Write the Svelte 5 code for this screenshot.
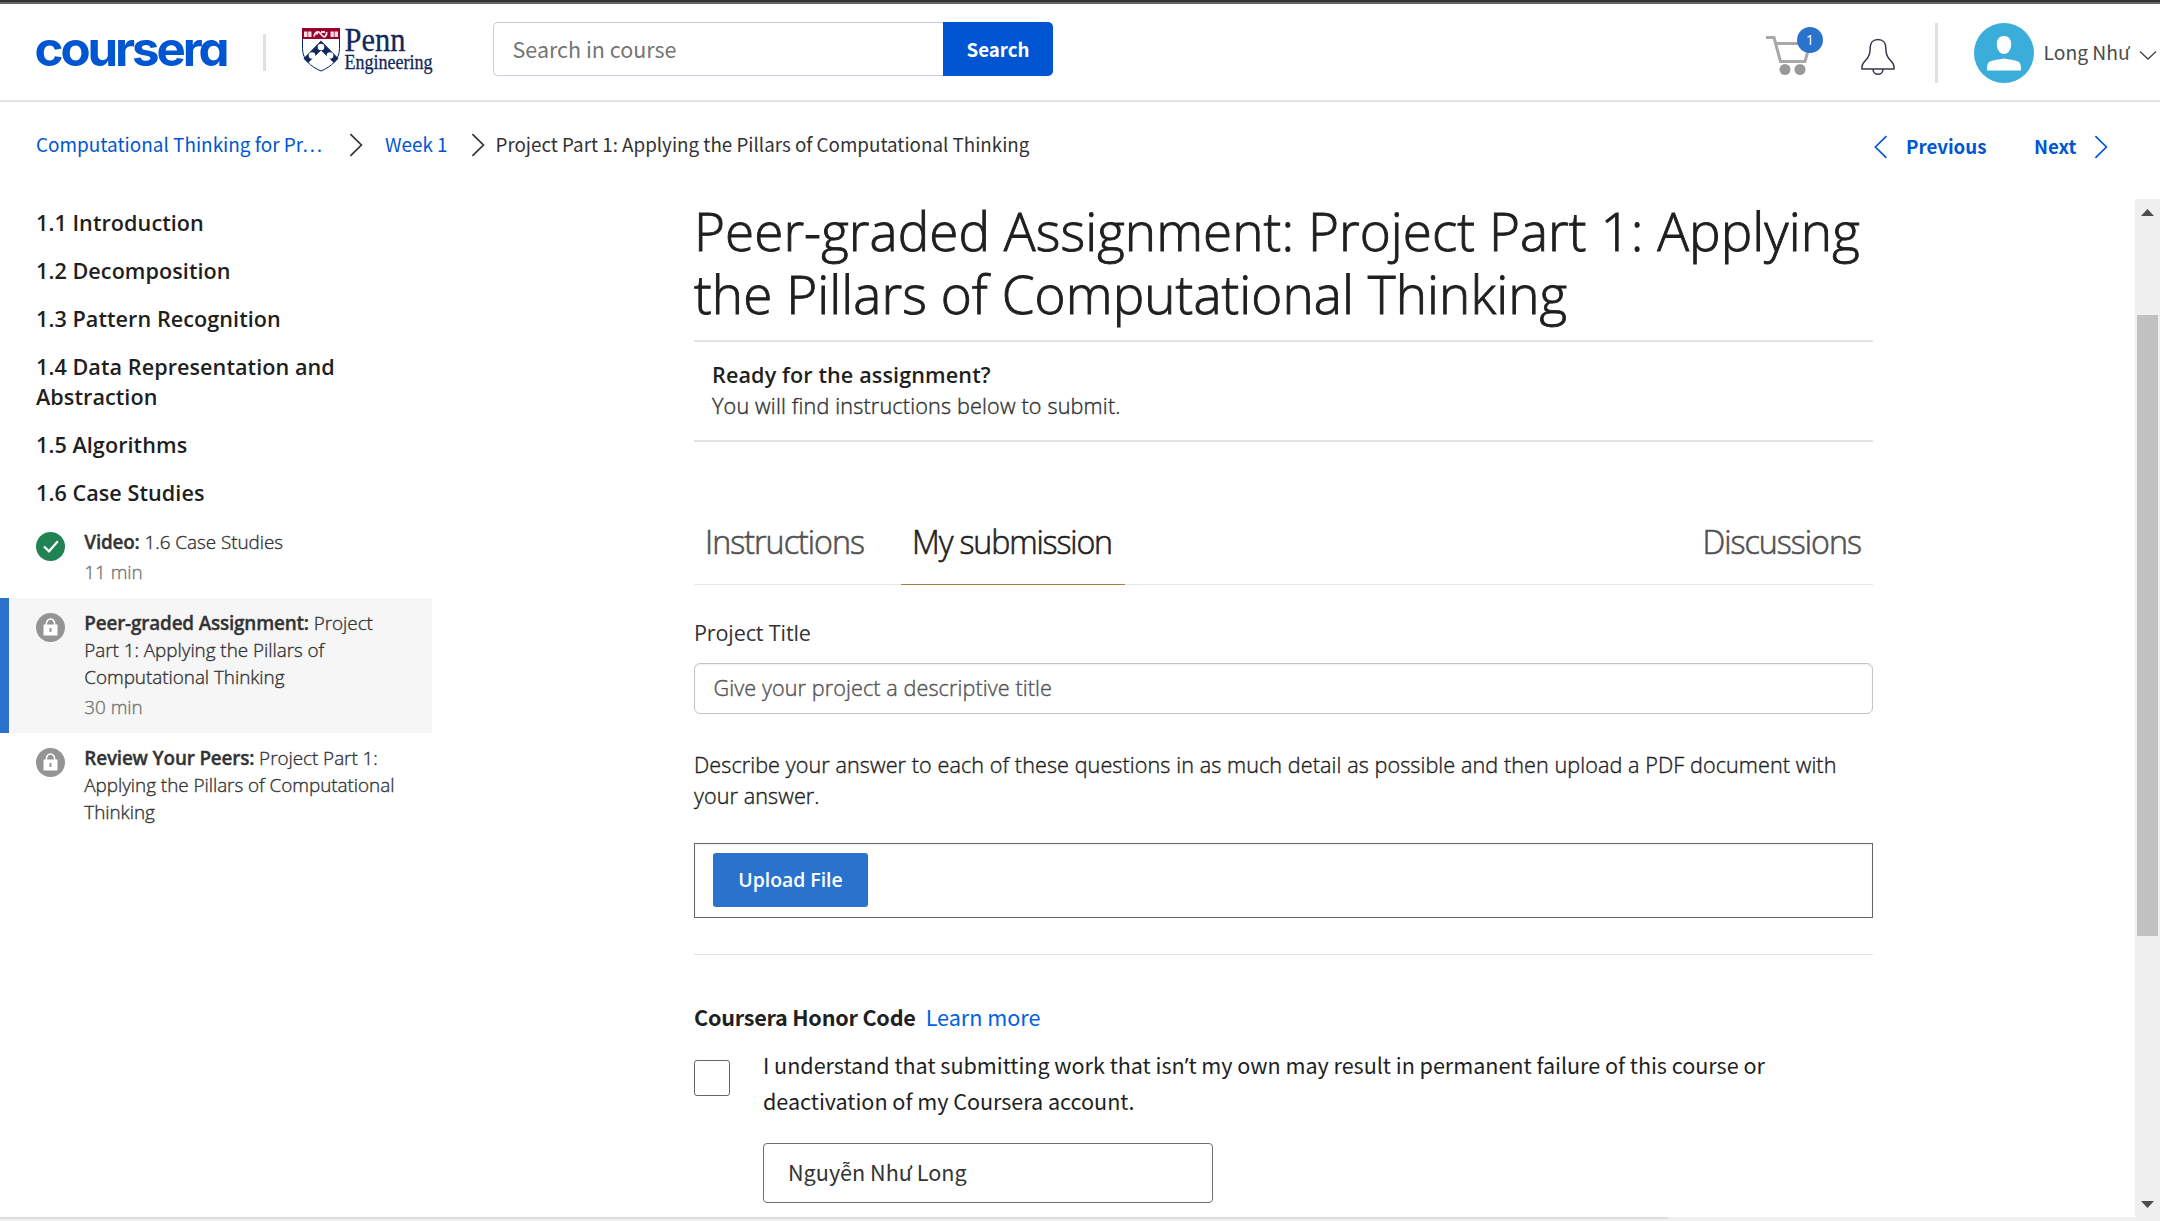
<script>
  const weeks = [
    '1.1 Introduction',
    '1.2 Decomposition',
    '1.3 Pattern Recognition',
    '1.4 Data Representation and Abstraction',
    '1.5 Algorithms',
    '1.6 Case Studies'
  ];

  const items = [
    { kind: 'Video:', name: '1.6 Case Studies', time: '11 min', done: true },
    {
      kind: 'Peer-graded Assignment:',
      name: 'Project Part 1: Applying the Pillars of Computational Thinking',
      time: '30 min',
      active: true
    },
    { kind: 'Review Your Peers:', name: 'Project Part 1: Applying the Pillars of Computational Thinking' }
  ];
</script>

{#snippet chevron(dir)}
  <svg class="chev" width="14" height="24" viewBox="0 0 14 24">
    <path d={dir === 'left' ? 'M12.4 1.2 1.4 12l11 10.8' : 'M1.4 1.2 12.4 12l-11 10.8'} />
  </svg>
{/snippet}

<div class="page">
  <header>
    <svg class="brand" width="200" height="44" viewBox="0 0 200 44" aria-label="coursera">
      <text x="1.5" y="36.5" textLength="192" lengthAdjust="spacingAndGlyphs">coursera</text>
    </svg>
    <span class="rule short"></span>
    <svg class="penn" width="136" height="52" viewBox="0 0 136 52">
      <path class="shield" d="M.5.5h37v20c0 11-8 18-18.500 22.500C8.500 38.500.5 31.500.5 20.500z" />
      <path class="band" d="M0 0h38v11H0z" />
      <path class="book" d="M2 3.500h3.500v5.500H2zM6.200 3.500h3.300v5.500H6.200zM28.500 3.500h3.300v5.500h-3.300zM32.500 3.500H36v5.500h-3.500z" />
      <path class="snake" d="M12 8.500c1-5 4-5.500 6-3.500s3 5 5 3.500 2-2.500 1.500-4.500M13 5.500h3M19 4h4" />
      <path class="chevron" d="M19 12.500 36.500 30.500 32 35 19 22.500 6 35 1.500 30.500z" />
      <circle cx="19" cy="19" r="3.300" /><circle cx="10" cy="27.500" r="3.300" /><circle cx="28" cy="27.500" r="3.300" />
      <text class="p1" x="42.500" y="23" textLength="61" lengthAdjust="spacingAndGlyphs">Penn</text>
      <text class="p2" x="42.500" y="40.500" textLength="88" lengthAdjust="spacingAndGlyphs">Engineering</text>
    </svg>

    <div class="search">
      <div class="field">Search in course</div>
      <button>Search</button>
    </div>

    <div class="cart">
      <svg width="48" height="42" viewBox="0 0 48 42">
        <path d="M0 3.500h8l6.500 24H39L44 9.500H9.500" />
        <circle cx="19" cy="35.500" r="5.500" /><circle cx="34" cy="35.500" r="5.500" />
      </svg>
      <span class="badge">1</span>
    </div>
    <svg class="bell" width="36" height="38" viewBox="0 0 36 38">
      <path d="M18 1.500c-5 0-7.800 3.500-7.800 8 0 4.500-.4 7.500-2.700 10.500-2.600 3.400-5.500 5-5.500 8.500v2.500h32v-2.500c0-3.500-2.900-5.100-5.500-8.500-2.300-3-2.700-6-2.700-10.500 0-4.500-2.800-8-7.800-8zM13 31c0 7 10 7 10 0" />
    </svg>
    <span class="rule tall"></span>
    <svg class="avatar" width="60" height="60" viewBox="0 0 60 60">
      <circle cx="30" cy="30" r="30" />
      <path d="M30 13c4.500 0 7.200 3 7.200 8 0 5.500-3 10-7.200 10s-7.200-4.500-7.200-10c0-5 2.700-8 7.200-8zM13 47.500c0-5 .5-8 3-9 4-1.800 8-2 14-3 6 1 10 1.200 14 3 2.500 1 3 4 3 9z" />
    </svg>
    <span class="user">Long Như</span>
    <svg class="down" width="18" height="11" viewBox="0 0 18 11"><path d="M1 1.500 9 9l8-7.500" /></svg>
  </header>

  <nav class="crumbs">
    <a class="c1" href="#course">Computational Thinking for Pr…</a>
    {@render chevron('right')}
    <a class="c2" href="#week">Week 1</a>
    {@render chevron('right')}
    <span class="c3">Project Part 1: Applying the Pillars of Computational Thinking</span>
    <div class="pager">
      {@render chevron('left')}
      <b class="prev">Previous</b>
      <b class="next">Next</b>
      {@render chevron('right')}
    </div>
  </nav>

  <div class="body">
    <aside>
      {#each weeks as week}
        <h3>{week}</h3>
      {/each}
      {#each items as item}
        <div class="item" class:active={item.active}>
          <svg class="status" class:done={item.done} width="29" height="29" viewBox="0 0 29 29">
            <circle cx="14.500" cy="14.500" r="14.500" />
            {#if item.done}
              <path class="tick" d="M8 14.500l5 4.800 8.800-10" />
            {:else}
              <path class="lock" d="M7.500 11.500h14v11h-14z" />
              <path class="shackle" d="M10.300 12c-.6-8 9-8 8.400 0" />
              <path class="key" d="M14.500 15v4" />
            {/if}
          </svg>
          <div class="label">
            <div class="name"><b>{item.kind}</b> {item.name}</div>
            {#if item.time}<div class="time">{item.time}</div>{/if}
          </div>
        </div>
      {/each}
    </aside>

    <main>
      <h1>Peer-graded Assignment: Project Part 1: Applying the Pillars of Computational Thinking</h1>
      <section class="ready">
        <b>Ready for the assignment?</b>
        <p>You will find instructions below to submit.</p>
      </section>
      <div class="tabs">
        <span class="tab first">Instructions</span>
        <span class="tab on">My submission</span>
        <span class="tab last">Discussions</span>
      </div>
      <div class="ptitle">Project Title</div>
      <div class="input">Give your project a descriptive title</div>
      <p class="describe">Describe your answer to each of these questions in as much detail as possible and then upload a PDF document with your answer.</p>
      <div class="upload"><button>Upload File</button></div>
      <hr />
      <div class="honor"><b>Coursera Honor Code</b><a href="#honor">Learn more</a></div>
      <div class="agree">
        <span class="box"></span>
        <div>
          <p>I understand that submitting work that isn<span class="quote">’</span>t my own may result in permanent failure of this course or deactivation of my Coursera account.</p>
          <div class="sign">Nguyễn Như Long</div>
        </div>
      </div>
    </main>

    <div class="scroll">
      <svg width="13" height="7" viewBox="0 0 13 7"><path d="M0 7 6.500 0 13 7z" /></svg>
      <span class="thumb"></span>
      <svg width="13" height="7" viewBox="0 0 13 7"><path d="M0 0h13L6.500 7z" /></svg>
    </div>
  </div>
  <footer><span></span></footer>
</div>

<style>
  :global(body) { overflow: hidden; }
  * { box-sizing: border-box; }
  .page {
    width: 2160px;
    height: 1221px;
    display: flex;
    flex-direction: column;
    background: #fff;
    color: #1f1f1f;
    font-family: "Open Sans", sans-serif;
    font-size: 21.6px;
    line-height: 31px;
  }
  p, h1, h3 { margin: 0; }
  a { color: #0056d2; text-decoration: none; }
  button { border: 0; padding: 0; color: #fff; text-align: center; }
  svg { flex: none; display: block; overflow: visible; }

  header {
    height: 102px;
    flex: none;
    display: flex;
    align-items: flex-start;
    border-top: 2px solid #333;
    border-bottom: 2px solid #e3e3e3;
    box-shadow: inset 0 2px #666;
    font-family: "Noto Sans CJK SC", sans-serif;
    padding-left: 33px;
    white-space: nowrap;
  }
  .brand { margin-top: 27px; }
  .brand text { font: 700 48px Inter, sans-serif; font-feature-settings: "cv11"; letter-spacing: -3px; fill: #0056d2; }
  .rule { width: 3px; background: #e0e0e0; flex: none; }
  .short { height: 37px; margin: 32px 0 0 30px; }
  .tall { height: 60px; margin: 21px 0 0 39px; }
  .penn { margin: 26px 0 0 36px; }
  .shield { fill: #fff; stroke: #01256e; stroke-width: 1; }
  .band { fill: #98002e; }
  .book { fill: #f3dfe5; }
  .snake { fill: none; stroke: #f3dfe5; stroke-width: 1.8; }
  .chevron { fill: #12295c; }
  .penn circle { fill: #fff; }
  .penn text { font-family: "Liberation Serif", serif; fill: #12295c; stroke: #12295c; stroke-width: .3; }
  .p1 { font-size: 34px; }
  .p2 { font-size: 20px; }
  .search { display: flex; margin: 20px 0 0 55px; height: 54px; }
  .field {
    width: 450px;
    border: 1px solid #c7ccd6;
    border-right: 0;
    border-radius: 5px 0 0 5px;
    padding-left: 18.500px;
    font-size: 21.500px;
    line-height: 52px;
    color: #757575;
  }
  .search button {
    width: 110px;
    background: #0056d2;
    border-radius: 0 5px 5px 0;
    font: 700 18.700px/52px "Noto Sans CJK SC", sans-serif;
  }
  .cart { margin: 32px 0 0 713px; position: relative; }
  .cart path { fill: none; stroke: #a8a8a8; stroke-width: 3; }
  .cart circle { fill: #999; }
  .badge {
    position: absolute;
    left: 31px;
    top: -7px;
    width: 26px;
    height: 26px;
    border-radius: 50%;
    background: #2a73cc;
    color: #fff;
    font: 14px/26px "Open Sans", sans-serif;
    text-align: center;
  }
  .bell { margin: 36px 0 0 46px; }
  .bell path { fill: none; stroke: #373a4d; stroke-width: 1.500; }
  .avatar { margin: 21px 0 0 36px; }
  .avatar circle { fill: #3badda; }
  .avatar path { fill: #fff; }
  .user { font-size: 19.300px; line-height: 28px; margin: 36px 0 0 9.500px; width: 95.500px; color: #4b4b4b; }
  .down path { fill: none; stroke: #444; stroke-width: 1.300; }
  .down { margin-top: 48px; }

  .crumbs {
    height: 97px;
    flex: none;
    display: flex;
    align-items: flex-start;
    padding: 28px 0 0 36px;
    font: 18.950px/28px "Noto Sans CJK SC", sans-serif;
    white-space: nowrap;
  }
  .chev { margin-top: 3px; }
  .chev path { fill: none; stroke: #333; stroke-width: 1.700; }
  .c1 { width: 313px; }
  .c2 { margin-left: 22px; width: 86px; font-size: 18.850px; }
  .c3 { margin-left: 10.500px; font-size: 18.800px; color: #333; }
  .pager { display: flex; margin: 2px 52px 0 auto; color: #0056d2; font-size: 18.700px; }
  .pager .chev path { stroke: #0056d2; }
  .prev { margin-left: 18px; width: 128px; }
  .next { width: 60px; }

  .body { flex: 1; min-height: 0; display: flex; }
  aside { width: 432px; }
  h3 { font-size: 21.600px; font-weight: 600; line-height: 30px; letter-spacing: .06px; padding: 9px 90px 9px 36px; }
  .item {
    display: flex;
    padding: 12px 32px 12px 36px;
    font-size: 18.900px;
    line-height: 27px;
    color: #333;
    font-weight: 300;
    letter-spacing: -.040px;
    -webkit-text-stroke: .35px;
  }
  .active { background: #f6f6f6; box-shadow: inset 9px 0 #2a73cc; }
  .status { margin: 2.500px 19px 0 .3px; }
  .status circle { fill: #949494; }
  .done circle { fill: #1f8354; }
  .tick { fill: none; stroke: #fff; stroke-width: 2.200; }
  .lock { fill: #fff; }
  .shackle { fill: none; stroke: #fff; stroke-width: 1.600; }
  .key { stroke: #949494; stroke-width: 2; }
  .item b { font-weight: 600; letter-spacing: -.18px; }
  .time { margin-top: 3px; color: #757575; }

  main { width: 1179px; margin-left: 262px; }
  h1 { font-size: 53px; line-height: 63px; font-weight: 300; letter-spacing: .06px; -webkit-text-stroke: .9px; }
  .ready { margin-top: 15px; border: 2px solid #e4e4e4; border-width: 2px 0; padding: 17px 0 19px 18px; }
  .ready b { font-weight: 600; letter-spacing: .11px; }
  .ready p, .input, .describe { font-weight: 300; -webkit-text-stroke: .4px; }
  .ready p { color: #333; letter-spacing: .17px; }
  .tabs {
    margin-top: 78px;
    display: flex;
    height: 65px;
    border-bottom: 1px solid #e8e8e8;
    font-size: 32.200px;
    line-height: 44px;
    letter-spacing: -.960px;
    font-weight: 300;
    -webkit-text-stroke: .6px;
    color: #525252;
  }
  .tab { padding: 0 10px 0 11px; height: 65px; white-space: nowrap; }
  .first { width: 171px; }
  .on { margin-left: 36px; width: 224px; border-bottom: 1px solid #a67f3b; color: #1f1f1f; letter-spacing: -1.150px; }
  .last { margin-left: auto; padding-right: 12px; letter-spacing: -1px; }
  .ptitle { margin-top: 32px; letter-spacing: -.150px; color: #333; }
  .input {
    margin-top: 15px;
    height: 51px;
    border: 1px solid #c4c4c4;
    border-radius: 6px;
    box-shadow: inset 0 1px 2px #0001;
    padding-left: 18.500px;
    line-height: 48px;
    color: #555;
    letter-spacing: .1px;
  }
  .describe { margin-top: 35px; letter-spacing: .08px; }
  .upload { margin-top: 32px; height: 75px; border: 1px solid #666; padding: 9px 0 0 18px; box-shadow: inset 0 1px 2px #0001; }
  .upload button { display: block; width: 155px; height: 54px; border-radius: 3px; background: #2a73cc; font: 600 19.400px/54px "Open Sans", sans-serif; }
  hr { margin: 36px 0 0; border: 0; height: 1px; background: #e0e0e0; }
  .honor { margin-top: 44px; font-family: "Noto Sans CJK SC", sans-serif; line-height: 36px; }
  .honor b { letter-spacing: -.230px; margin-right: 10px; }
  .honor a { color: #0062e4; }
  .agree { margin-top: 12px; display: flex; font-family: "Noto Sans CJK SC", sans-serif; }
  .box { width: 36px; height: 36px; margin: 13px 33px 0 0; border: 1.500px solid #666; border-radius: 3px; flex: none; }
  .agree p { line-height: 36px; letter-spacing: -.035px; width: 1040px; }
  .quote { font-family: "Noto Sans", sans-serif; line-height: 1; }
  .sign { margin-top: 24px; width: 450px; height: 60px; border: 1px solid #707070; border-radius: 4px; padding-left: 24px; line-height: 56px; color: #333; }

  .scroll { margin-left: auto; width: 25px; background: #f0f0f0; display: flex; flex-direction: column; align-items: center; padding: 10px 1px 9px 0; }
  .scroll svg { fill: #4d4d4d; }
  .thumb { width: 21px; height: 621px; margin: 99px 0 auto 1px; background: #c1c1c1; }
  footer { height: 4px; flex: none; background: #f0f0f0; }
  footer span { display: block; width: 1668px; height: 2px; background: #dedede; }
</style>
